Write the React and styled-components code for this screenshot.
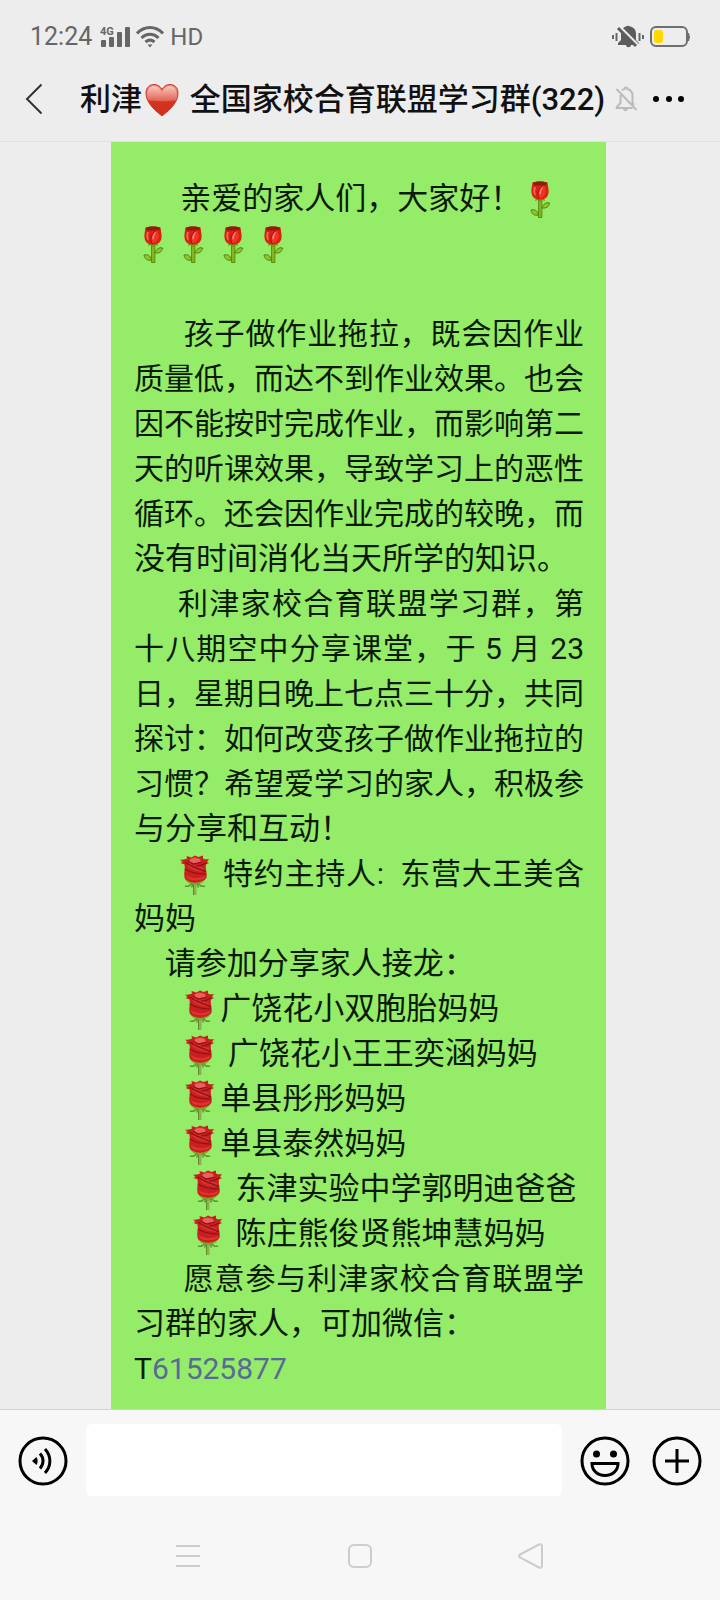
import React from 'react';
import styled, { createGlobalStyle } from 'styled-components';

// t: tulip emoji, r: rose emoji, full: the line runs to both edges
const lines = [
  { text: '      亲爱的家人们，大家好！t' },
  { text: 'tttt' },
  { text: '' },
  { text: '      孩子做作业拖拉，既会因作业', full: true },
  { text: '质量低，而达不到作业效果。也会', full: true },
  { text: '因不能按时完成作业，而影响第二', full: true },
  { text: '天的听课效果，导致学习上的恶性', full: true },
  { text: '循环。还会因作业完成的较晚，而', full: true },
  { text: '没有时间消化当天所学的知识。' },
  { text: '     利津家校合育联盟学习群，第', full: true },
  { text: '十八期空中分享课堂，于 5 月 23', full: true },
  { text: '日，星期日晚上七点三十分，共同', full: true },
  { text: '探讨：如何改变孩子做作业拖拉的', full: true },
  { text: '习惯？希望爱学习的家人，积极参', full: true },
  { text: '与分享和互动！' },
  { text: '     r 特约主持人:  东营大王美含', full: true },
  { text: '妈妈' },
  { text: '    请参加分享家人接龙：' },
  { text: '      r广饶花小双胞胎妈妈' },
  { text: '      r 广饶花小王王奕涵妈妈' },
  { text: '      r单县彤彤妈妈' },
  { text: '      r单县泰然妈妈' },
  { text: '       r 东津实验中学郭明迪爸爸' },
  { text: '       r 陈庄熊俊贤熊坤慧妈妈' },
  { text: '      愿意参与利津家校合育联盟学', full: true },
  { text: '习群的家人，可加微信：' },
];

const Tulip = () => (
  <Emoji viewBox='1 0 40 40' role='img' aria-label='玫瑰'>
    <path d='M18.500 18h3.400v19.500h-3.400z' fill='#86b520' stroke='#4f8010' strokeWidth='.8' />
    <path d='M22 28c1-4 4-6 7.500-5-.5 4-3.500 5.500-7.500 5z' fill='#8fc52a' stroke='#4f8010' strokeWidth='1' />
    <path d='M18.500 35c-1-4.500-4-6-7.500-5 .5 4 3.500 6 7.500 5z' fill='#8fc52a' stroke='#4f8010' strokeWidth='1' />
    <path d='M16 18l-1 3 3-1 2 2 2-2 3 1-1-3z' fill='#6d9a16' />
    <path d='M12.500 2.500c4-1.500 11-1.500 15 0 .5 5 2 9 .5 12.500-1 3-4 4.500-8 4.500s-7-1.500-8-4.500c-1.500-4 0-8 .5-12.500z' fill='#dc2012' />
    <path d='M13 2.500c4-1.500 10-1.500 14 0l-.5 2.500c-3 .8-10 .8-13 0z' fill='#8d1d0a' />
    <path d='M19.500 19c-3-4-2-10 4-14 3 3 4 11-4 14z' fill='#ea3528' />
    <path d='M22.500 7c-2.500 2-3.500 4.500-3 7.500l1.500-.5c0-2.500.5-4.500 2-6.500z' fill='#fb8378' />
    <path d='M14 7c-1 3-1 6 .5 8l1.500.5c-1-3-1-6 0-8.500z' fill='#f2665c' />
    <path d='M19.500 19c-3-4-2-10 4-14' fill='none' stroke='#a81208' strokeWidth='1' />
  </Emoji>
);

const Rose = () => (
  <Emoji viewBox='0 0 40 40' role='img' aria-label='玫瑰'>
    <path d='M18.500 28h3v12h-3z' fill='#8fb050' />
    <path d='M18.500 28v12' stroke='#5f8a2a' strokeWidth='1' />
    <path d='M9.500 22c1 5 5 7.500 10.500 7.500S30 27 31 22z' fill='#8aa81c' />
    <path d='M17 28c-2 3-4 4-7 3M23 28c2 3 4 4 7 3M18 29l-1.500 3.500M22 29l1.500 3.500' fill='none' stroke='#5e9638' strokeWidth='1.500' />
    <path
      d='M5 4.500c3 .5 5 0 7-1L11.500 1l5 1.500L20 .5l3.500 1.500L28 .5v3c2 1 4 1 6 .5l-2 3 2 1-3 1.500c-1 4 1.500 9 .5 13-1.500 3.500-7 5-11.500 5s-9.500-1.500-10.500-5c-1-5 1-9 0-13L5.500 8l2-1z'
      fill='#c9201f'
    />
    <path d='M15 4l5-1.500L25 4l1 3-6 1.500L14 7z' fill='#e8615a' />
    <path d='M12 11c4 4 10 5 16 6l1-4c-5-1-10-3-14-6z' fill='#d8302e' />
    <path d='M11 20c5 4 13 4 19 1v2c-5 3-14 3-18 0z' fill='#e13432' />
    <path
      d='M10 7c4 4 13 6 21 10M31 8c-3 2-6 3-10 3M10 14c6 4 13 5 21 5M13 6l5 3 9-2'
      fill='none'
      stroke='#8c1119'
      strokeWidth='1.200'
    />
    <path d='M19 28l1-2 1 2z' fill='#c9201f' />
  </Emoji>
);

const Heart = () => (
  <Emoji viewBox='0 1 40 40' role='img' aria-label='爱心'>
    <defs>
      <linearGradient id='heart' x1='0' y1='0' x2='0' y2='1'>
        <stop offset='0' stopColor='#ee8a7c' />
        <stop offset='.5' stopColor='#e0574a' />
        <stop offset='.54' stopColor='#d3351f' />
        <stop offset='1' stopColor='#d22d1b' />
      </linearGradient>
      <linearGradient id='shine' x1='0' y1='0' x2='0' y2='1'>
        <stop offset='0' stopColor='#f7c8c0' />
        <stop offset='1' stopColor='#e2604f' />
      </linearGradient>
    </defs>
    <path
      d='M20 36C11 29 4 22 4 13 4 7 8 4.500 12 4.500c4 0 6.500 2 8 5 1.500-3 4-5 8-5s8 2.500 8 8.500c0 9-7 16-16 23z'
      fill='url(#heart)'
      stroke='#c93c30'
    />
    <path d='M5.500 19C4 11 7 6 12 6c4 0 6.500 3 8 6 1.500-3 4-6 8-6 5 0 8 5 6.500 13-5 3-24 3-29 0z' fill='url(#shine)' />
  </Emoji>
);

const Line = ({ text, full }) => (
  <Row $full={full}>
    {text.split(/([tr])/).map((part, i) => {
      if (part === 't') return <Tulip key={i} />;
      if (part === 'r') return <Rose key={i} />;
      return part;
    })}
  </Row>
);

const App = () => {
  return (
    <Page>
      <GlobalStyle />
      <Header>
        <StatusBar>
          <Clock>12:24</Clock>
          <Signal viewBox='0 0 30 22'>
            <rect x='1' y='14' width='5' height='7' rx='1' />
            <rect x='9' y='11' width='5' height='10' rx='1' />
            <rect x='17' y='6' width='5' height='15' rx='1' />
            <rect x='25' y='1' width='5' height='20' rx='1' />
            <text x='0' y='9'>4G</text>
          </Signal>
          <svg width='28' height='22' viewBox='0 0 28 22' fill='none' stroke='#666' strokeWidth='3'>
            <path d='M1 7.500C8.500-.5 19.500-.5 27 7.500M5.500 12c5-5 12-5 17 0M9.500 16c3-2.500 6-2.500 9 0' />
            <path d='M11.500 18.500h5L14 21.500z' fill='#666' stroke='none' />
          </svg>
          <span>HD</span>
          <Spacer />
          <svg width='32' height='24' viewBox='0 0 32 24'>
            <path d='M6 20v-2l3-3V9c0-4.500 2.500-7 5-7.500C15 .5 17 .5 18 1.500c3.500.5 6 3 6 7.500v6l3 3v2h-8c0 3-5 3-5 0z' fill='#5c5c5c' />
            <path d='M6.500 1.500l20 20' stroke='#ececec' strokeWidth='4' />
            <path d='M6 3l18 18' stroke='#5c5c5c' strokeWidth='3' />
            <path d='M1 10v4M4.500 8v8M27.500 8v8M31 10v4' stroke='#666' strokeWidth='2' />
          </svg>
          <svg width='40' height='22' viewBox='0 0 40 22'>
            <rect x='1' y='1' width='36' height='19' rx='5' fill='none' stroke='#6e6e6e' strokeWidth='2' />
            <path d='M38 7h1l1 4-1 4h-1z' fill='#6e6e6e' />
            <rect x='4' y='4' width='9' height='13' rx='3' fill='#ffd800' />
          </svg>
        </StatusBar>
        <TitleBar>
          <IconButton aria-label='返回'>
            <svg width='18' height='32' viewBox='0 0 18 32' fill='none' stroke='#333' strokeWidth='2'>
              <path d='M16.500 1.500L2 16l14.500 14.500' />
            </svg>
          </IconButton>
          <Title>
            利津
            <Heart /> 全国家校合育联盟学习群(322)
          </Title>
          <Muted viewBox='0 0 24 26'>
            <path d='M2 22h16.500M6.500 9v8L2 22M8 4.500c1-1 2-1.500 2.500-1.500 0-2 3-2 3 0C17 4 18.500 7 18.500 9.500V17l1.500 2M10 23c0 1.500 3 1.500 3 0M2.500 3l20 21' />
          </Muted>
          <IconButton aria-label='更多'>
            <svg width='34' height='8' viewBox='0 0 34 8'>
              <circle cx='4' cy='4' r='3' />
              <circle cx='17' cy='4' r='3' />
              <circle cx='29' cy='4' r='3' />
            </svg>
          </IconButton>
        </TitleBar>
      </Header>
      <Chat>
        <Bubble>
          {lines.map((line, i) => (
            <Line key={i} {...line} />
          ))}
          <Row $latin>
            T<a href='#61525877'>61525877</a>
          </Row>
        </Bubble>
      </Chat>
      <Composer>
        <IconButton aria-label='语音'>
          <RoundIcon viewBox='0 0 50 50'>
            <circle cx='25' cy='26' r='23' />
            <path d='M14 26l4.500-4c1.500 2.500 1.500 5.500 0 8z' fill='#000' stroke='none' />
            <path d='M22 18.500c4 4.500 4 10.500 0 15M27 14c6.500 7 6.500 17 0 24' />
          </RoundIcon>
        </IconButton>
        <MessageInput type='text' aria-label='消息' />
        <IconButton aria-label='表情'>
          <RoundIcon viewBox='0 0 50 50'>
            <circle cx='25' cy='26' r='23' />
            <circle cx='16.500' cy='19' r='3.500' fill='#000' stroke='none' />
            <circle cx='33.500' cy='19' r='3.500' fill='#000' stroke='none' />
            <path d='M12 28.500h26c0 7-5.500 12-13 12s-13-5-13-12z' />
          </RoundIcon>
        </IconButton>
        <More aria-label='添加'>
          <RoundIcon viewBox='0 0 50 50'>
            <circle cx='25' cy='26' r='23' />
            <path d='M25 14v24M13 26h24' />
          </RoundIcon>
        </More>
      </Composer>
      <SystemNav>
        <IconButton aria-label='菜单'>
          <NavIcon viewBox='0 0 28 28'>
            <path d='M2 5h24M2 15h24M2 25h24' />
          </NavIcon>
        </IconButton>
        <IconButton aria-label='主页'>
          <NavIcon viewBox='0 0 28 28'>
            <rect x='3' y='4' width='22' height='22' rx='5' />
          </NavIcon>
        </IconButton>
        <IconButton aria-label='后退'>
          <NavIcon viewBox='0 0 28 28'>
            <path d='M2 13.500L21 3.500q3-1 3 2v19q0 3-3 2L2 16.500q-2-1.500 0-3z' />
          </NavIcon>
        </IconButton>
      </SystemNav>
    </Page>
  );
};

const GlobalStyle = createGlobalStyle`
  * {
    box-sizing: border-box;
  }
  body {
    margin: 0;
    background: #f7f7f7;
    font-family: Roboto, 'Noto Sans CJK SC', sans-serif;
  }
`;

const Page = styled.div`
  display: flex;
  flex-direction: column;
  min-height: 100vh;
  color: #0a1a05;
`;

const Header = styled.header`
  background: #ededed;
  border-bottom: 1px solid #e0e0e0;
`;

const StatusBar = styled.div`
  display: flex;
  align-items: center;
  gap: 6px;
  height: 57px;
  padding: 16px 30px 0 30px;
  font-size: 24px;
  color: #666;
`;

const Clock = styled.span`
  margin-right: 2px;
  font-size: 25px;
`;

const Signal = styled.svg`
  width: 30px;
  height: 22px;
  fill: #666;

  text {
    font-size: 11px;
    font-weight: 700;
  }
`;

const Spacer = styled.div`
  flex: 1;
`;

const TitleBar = styled.div`
  display: flex;
  align-items: center;
  height: 84px;
  padding: 0 34px 0 25px;
  color: #111;
`;

const Title = styled.h1`
  flex: 1;
  margin: 0 0 0 37px;
  font-size: 31px;
  font-weight: 500;
  line-height: 45px;
  white-space: nowrap;
`;

const Muted = styled.svg`
  width: 24px;
  height: 26px;
  margin-right: 14px;
  fill: none;
  stroke: #bbb;
  stroke-width: 2;
`;

const IconButton = styled.button`
  display: flex;
  align-items: center;
  justify-content: center;
  padding: 0;
  border: none;
  background: transparent;
  cursor: pointer;
`;

const Chat = styled.main`
  display: flex;
  flex: 1;
  padding: 0 114px 0 111px;
  background: #ededed;
`;

const Bubble = styled.div`
  flex: 1;
  padding: 34px 22px 18px 23px;
  background: #95ec69;
`;

const Row = styled.div`
  min-height: 45px;
  font-size: ${({ $full, $latin }) => ($full || $latin ? '30px' : '31px')};
  line-height: 45px;
  text-align-last: ${({ $full }) => ($full ? 'justify' : 'left')};
  white-space: pre-wrap;

  a {
    color: #576b95;
    text-decoration: none;
  }
`;

const Emoji = styled.svg`
  width: 40px;
  height: 40px;
  vertical-align: -11px;
`;

const Composer = styled.div`
  display: flex;
  align-items: center;
  gap: 18px;
  padding: 14px 18px;
  border-top: 1px solid #d2d2d2;
  background: #f7f7f7;
`;

const MessageInput = styled.input`
  flex: 1;
  min-width: 0;
  height: 72px;
  padding: 0 16px;
  border: none;
  border-radius: 6px;
  background: #fff;
  font-size: 31px;
`;

const More = styled(IconButton)`
  margin-left: 4px;
`;

const RoundIcon = styled.svg`
  width: 50px;
  height: 50px;
  overflow: visible;
  fill: none;
  stroke: #000;
  stroke-width: 3;
`;

const SystemNav = styled.nav`
  display: grid;
  grid-template-columns: repeat(3, 172px);
  justify-content: center;
  height: 90px;
  background: #f7f7f7;
`;

const NavIcon = styled.svg`
  width: 28px;
  height: 28px;
  fill: none;
  stroke: #ccc;
  stroke-width: 2;
`;

export default App;
